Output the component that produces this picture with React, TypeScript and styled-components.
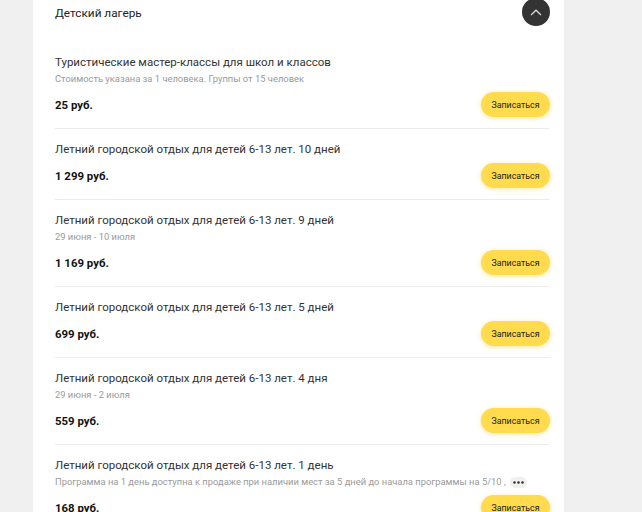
import React from 'react'
import styled, { createGlobalStyle } from 'styled-components'

const GlobalStyle = createGlobalStyle`
  html, body {
    margin: 0;
    padding: 0;
    background: #f0f0f0;
    font-family: Roboto, "Open Sans", sans-serif;
    overflow: hidden;
  }
`

const Page = styled.div`
  padding-left: 33px;
  width: 531px;
`

const Card = styled.div`
  background: #ffffff;
  padding: 0 14px 0 22px;
  min-height: 520px;
`

const Header = styled.div`
  display: flex;
  justify-content: space-between;
  align-items: flex-start;
  height: 42px;
`

const HeaderTitle = styled.div`
  font-size: 11.8px;
  line-height: 18px;
  color: #222;
  margin-top: 4px;
`

const Toggle = styled.button`
  width: 28px;
  height: 28px;
  margin-top: -2px;
  border: none;
  border-radius: 50%;
  background: #333333;
  display: grid;
  place-items: center;
  padding: 0;
  cursor: pointer;
`

const List = styled.div`
  display: flex;
  flex-direction: column;
`

const Item = styled.div`
  padding: 11px 0;
  border-bottom: 1px solid #ececec;
`

const Title = styled.div`
  font-size: 11.5px;
  line-height: 18px;
  color: #333;
`

const Note = styled.div`
  display: flex;
  align-items: center;
  gap: 4px;
  font-size: 9.4px;
  line-height: 16px;
  color: #9a9a9a;
  white-space: nowrap;
`

const More = styled.span`
  display: grid;
  place-items: center;
  width: 17px;
  height: 11px;
  border-radius: 6px;
  background: #f0f0f0;
`

const Row = styled.div`
  display: flex;
  justify-content: space-between;
  align-items: center;
  margin-top: 5px;
`

const Price = styled.div`
  font-size: 11.4px;
  font-weight: 700;
  color: #111;
`

const Button = styled.button`
  width: 69px;
  height: 25px;
  border: none;
  border-radius: 13px;
  background: #ffdb4d;
  box-shadow: 0 1px 5px rgba(255, 200, 40, 0.45);
  font-family: Roboto, "Open Sans", sans-serif;
  font-size: 8.8px;
  color: #222;
  padding: 0;
  cursor: pointer;
`

type Offer = { title: string; note?: string; price: string; more?: boolean }

const offers: Offer[] = [
  { title: 'Туристические мастер-классы для школ и классов', note: 'Стоимость указана за 1 человека. Группы от 15 человек', price: '25 руб.' },
  { title: 'Летний городской отдых для детей 6-13 лет. 10 дней', price: '1 299 руб.' },
  { title: 'Летний городской отдых для детей 6-13 лет. 9 дней', note: '29 июня - 10 июля', price: '1 169 руб.' },
  { title: 'Летний городской отдых для детей 6-13 лет. 5 дней', price: '699 руб.' },
  { title: 'Летний городской отдых для детей 6-13 лет. 4 дня', note: '29 июня - 2 июля', price: '559 руб.' },
  {
    title: 'Летний городской отдых для детей 6-13 лет. 1 день',
    note: 'Программа на 1 день доступна к продаже при наличии мест за 5 дней до начала программы на 5/10 ,',
    price: '168 руб.',
    more: true,
  },
]

const App = () => {
  return (
    <>
      <GlobalStyle />
      <Page>
        <Card>
          <Header>
            <HeaderTitle>Детский лагерь</HeaderTitle>
            <Toggle aria-label="Свернуть">
              <svg width="12" height="7" viewBox="0 0 12 7" fill="none">
                <path d="M1 6L6 1.2L11 6" stroke="#d8d8d8" strokeWidth="1.2" />
              </svg>
            </Toggle>
          </Header>
          <List>
            {offers.map((o) => (
              <Item key={o.title}>
                <Title>{o.title}</Title>
                {o.note && (
                  <Note>
                    <span>{o.note}</span>
                    {o.more && (
                      <More>
                        <svg width="11" height="3" viewBox="0 0 11 3">
                          <circle cx="1.5" cy="1.5" r="1.3" fill="#333" />
                          <circle cx="5.5" cy="1.5" r="1.3" fill="#333" />
                          <circle cx="9.5" cy="1.5" r="1.3" fill="#333" />
                        </svg>
                      </More>
                    )}
                  </Note>
                )}
                <Row>
                  <Price>{o.price}</Price>
                  <Button>Записаться</Button>
                </Row>
              </Item>
            ))}
          </List>
        </Card>
      </Page>
    </>
  )
}

export default App
